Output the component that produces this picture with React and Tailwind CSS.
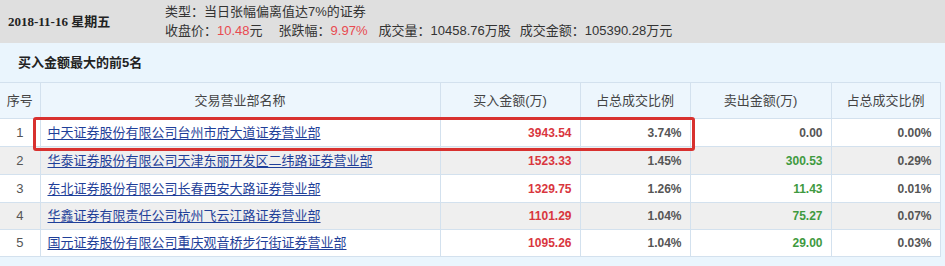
import React from "react";

const rows = [
  { no: 1, name: "中天证券股份有限公司台州市府大道证券营业部", buy: "3943.54", buyPct: "3.74%", sell: "0.00", sellPct: "0.00%" },
  { no: 2, name: "华泰证券股份有限公司天津东丽开发区二纬路证券营业部", buy: "1523.33", buyPct: "1.45%", sell: "300.53", sellPct: "0.29%" },
  { no: 3, name: "东北证券股份有限公司长春西安大路证券营业部", buy: "1329.75", buyPct: "1.26%", sell: "11.43", sellPct: "0.01%" },
  { no: 4, name: "华鑫证券有限责任公司杭州飞云江路证券营业部", buy: "1101.29", buyPct: "1.04%", sell: "75.27", sellPct: "0.07%" },
  { no: 5, name: "国元证券股份有限公司重庆观音桥步行街证券营业部", buy: "1095.26", buyPct: "1.04%", sell: "29.00", sellPct: "0.03%" },
];

const cjk = { fontFamily: '"Liberation Sans", "Noto Sans CJK SC", sans-serif' };

export default function App() {
  return (
    <div className="relative w-[945px] h-[266px] overflow-hidden bg-[#eaf5fd] text-[#333]" style={cjk}>
      <div className="h-[43px] bg-[#dfdfdf] flex items-center">
        <div className="w-[165px] pl-2 text-[13px] font-bold text-[#222]" style={{ fontFamily: '"Liberation Serif", "Noto Sans CJK SC", serif' }}>
          2018-11-16 星期五
        </div>
        <div className="flex flex-col text-[13px] leading-[19px] text-[#333] -mt-[2px]">
          <div>类型：当日张幅偏离值达7%的证券</div>
          <div className="flex">
            <span>收盘价：</span>
            <span className="text-[#e84a50]">10.48</span>
            <span>元</span>
            <span className="ml-[16px]">张跌幅：</span>
            <span className="text-[#e84a50]">9.97%</span>
            <span className="ml-[11px]">成交量：</span>
            <span>10458.76万股</span>
            <span className="ml-[9px]">成交金额：</span>
            <span>105390.28万元</span>
          </div>
        </div>
      </div>

      <div className="h-[39px] flex items-center pl-[18px] text-[13px] font-bold text-[#222]">
        买入金额最大的前5名
      </div>

      <table className="border-collapse table-fixed w-[940px] text-[13px]">
        <colgroup>
          <col className="w-[40px]" />
          <col className="w-[400px]" />
          <col className="w-[140px]" />
          <col className="w-[110px]" />
          <col className="w-[141px]" />
          <col className="w-[109px]" />
        </colgroup>
        <thead>
          <tr className="h-[36px] bg-[#edf6fd] text-[#444]">
            <th className="font-normal border-t border-r border-[#d3e1ee]">序号</th>
            <th className="font-normal border-t border-r border-[#d3e1ee]">交易营业部名称</th>
            <th className="font-normal border-t border-r border-[#d3e1ee]">买入金额(万)</th>
            <th className="font-normal border-t border-r border-[#d3e1ee]">占总成交比例</th>
            <th className="font-normal border-t border-r border-[#d3e1ee]">卖出金额(万)</th>
            <th className="font-normal border-t border-r border-[#d3e1ee]">占总成交比例</th>
          </tr>
        </thead>
        <tbody>
          {rows.map((r, i) => (
            <tr key={r.no} className={(i % 2 ? "bg-[#efefef]" : "bg-white") + (i < 3 ? " h-[28px]" : " h-[27px]")}>
              <td className="text-center text-[#555] border border-l-0 border-[#d3e1ee]">{r.no}</td>
              <td className="pl-[7px] border border-[#d3e1ee]">
                <a href="#" className="text-[#1f3f99] underline underline-offset-2">{r.name}</a>
              </td>
              <td className="text-right pr-2 text-[12px] font-bold text-[#d9363e] border border-[#d3e1ee]">{r.buy}</td>
              <td className="text-right pr-2 text-[12px] font-bold text-[#555] border border-[#d3e1ee]">{r.buyPct}</td>
              <td className={"text-right pr-2 text-[12px] font-bold border border-[#d3e1ee] " + (r.sell === "0.00" ? "text-[#555]" : "text-[#3f9a3f]")}>
                {r.sell}
              </td>
              <td className="text-right pr-2 text-[12px] font-bold text-[#555] border border-[#d3e1ee]">{r.sellPct}</td>
            </tr>
          ))}
        </tbody>
      </table>

      <div className="absolute left-[33px] top-[117px] w-[662px] h-[34px] border-[3px] border-[#d8312f] rounded-[3px] pointer-events-none" />
    </div>
  );
}
